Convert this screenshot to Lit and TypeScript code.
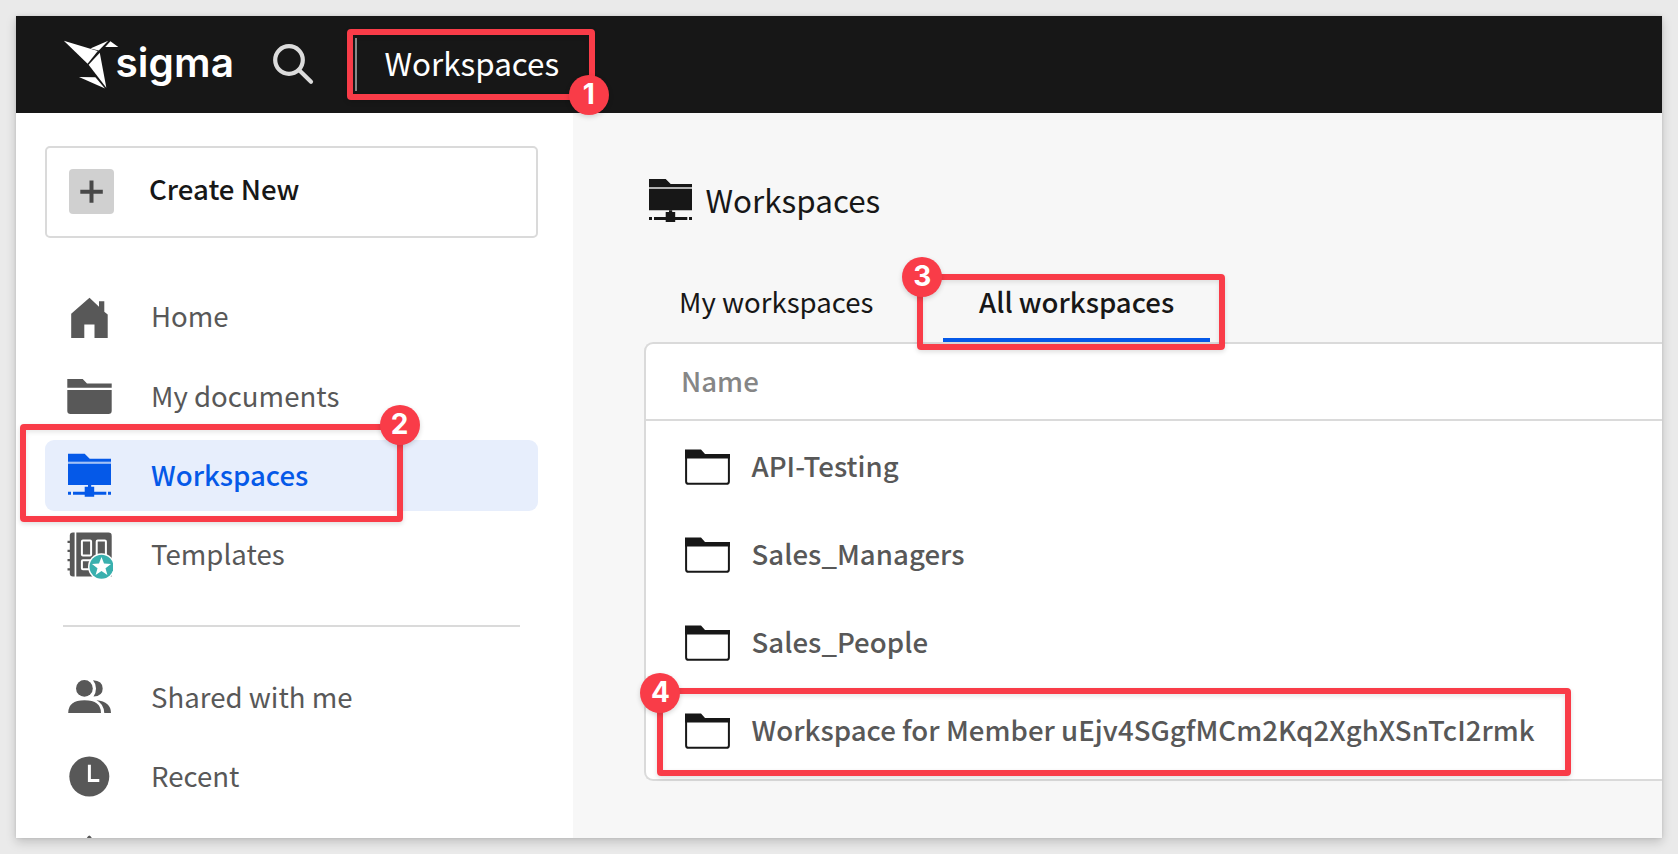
import { LitElement, html, css, svg } from "lit";
import { customElement, property } from "lit/decorators.js";
import { classMap } from "lit/directives/class-map.js";

const networkFolder = svg`
  <path d="M0 0H16.7L21.7 5H43V8H0Z"/>
  <path d="M0 8H43V10H0Z" opacity=".3"/>
  <path d="M0 10H43V31.3H0Z"/>
  <path d="M20 31.3H23.2V33H26.2V38H38.3V41H26.2V43H16.7V41H5V38H16.7V33H20Z"/>
  <path d="M0 38H3V41H0ZM40 38H43V41H40Z"/>
`;

const icons: Record<string, unknown> = {
  home: svg`<g transform="translate(-65 -292.8)"><path d="M71.2 313.5 89.5 297.5 99 306.5V301H104.3V311.5L107.7 314.3V337.7H94.5V324.2H84.3V337.7H71.2Z"/></g>`,
  folder: svg`<g transform="translate(-65 -371.8)"><path d="M67.3 378.7H82.7L87 383.2H111.7V387.5H67.3Z"/><path d="M67.3 389.8H111.7V410.5Q111.7 413.8 108.4 413.8H70.6Q67.3 413.8 67.3 410.5Z"/></g>`,
  workspaces: svg`<g transform="translate(3 2.7)">${networkFolder}</g>`,
  templates: svg`<g transform="translate(-65 -530.8)">
    <path d="M73 532.3H74.6V576.3H73Q69.8 576.3 69.8 573V535.5Q69.8 532.3 73 532.3Z"/>
    <path d="M67.5 540.5H71V542.7H67.5ZM67.5 549.6H71V551.8H67.5ZM67.5 558.8H71V561H67.5ZM67.5 568H71V570.2H67.5Z"/>
    <path d="M76.3 532.3H108.5Q111.7 532.3 111.7 535.5V576.3H76.3Z"/>
    <g fill="none" stroke="#fff" stroke-width="2"><rect x="81.9" y="540.3" width="9.2" height="15" rx="1"/><rect x="96.7" y="540.3" width="9.2" height="15" rx="1"/><rect x="81.9" y="560" width="9.2" height="9" rx="1"/></g>
    <circle cx="101.5" cy="566.5" r="13.5" fill="#fff"/><circle cx="101.5" cy="566.5" r="12" fill="#39b0ae"/>
    <path fill="#fff" d="M101.5 556.8 104 563.4 111 563.7 105.5 568 107.4 574.8 101.5 570.9 95.6 574.8 97.5 568 92 563.7 99 563.4Z"/></g>`,
  shared: svg`<g transform="translate(-65 -673.8)">
    <ellipse cx="84.4" cy="689.2" rx="8.4" ry="8.4"/>
    <path d="M93 681Q102.7 681.5 102.7 689.2 102.7 697 93.5 697.2 96 693.5 96 689.2 96 684.5 93 681Z"/>
    <path d="M68.2 713.8Q68.2 701 84.5 701 101 701 101 713.8Z"/>
    <path d="M96.5 701Q111 702.5 111 713.8H104.3Q103.8 704.5 96.5 701Z"/></g>`,
  recent: svg`<g transform="translate(-65 -752.8)"><circle cx="89.3" cy="776.4" r="20"/><path d="M89.4 764.5V780.2H99.3" fill="none" stroke="#fff" stroke-width="3"/></g>`,
  favorites: svg`<g transform="translate(-65 -832.2)"><path d="M89.3 835.6Q91.8 836.2 94.5 845L113 846 98 858 103 876 89.3 866 75 876 81 858 66 846 84.3 845Q86.8 836.2 89.3 835.6Z"/></g>`,
};

const logo = svg`
  <path d="M63.8 40.2 97.8 50.6 87.6 63.2Z"/>
  <path d="M90.4 47.9 108.2 40.3 98.8 49.9Z"/>
  <path d="M110.4 40.8 118.3 46.6H105.2Z"/>
  <path d="M99.8 52.2 106.3 87.2 88.6 64.2Z"/>
  <path d="M79 76.4 95.4 76.8 105 88Z"/>
`;

@customElement("nav-item")
class NavItem extends LitElement {
  @property() icon = "";
  @property() label = "";
  @property({ type: Boolean }) active = false;

  static styles = css`
    :host { display: block; flex: none; }
    .item { display: flex; align-items: center; height: 71px; padding-left: 20px; border-radius: 9px; color: #585858; }
    .item svg { flex: none; width: 48px; height: 48px; fill: currentColor; }
    .label { margin-left: 38px; padding-bottom: 3px; line-height: 40px; white-space: nowrap; }
    .active { background: #e7eefc; color: #0559e8; font-weight: 500; }
  `;

  render() {
    return html`<div class=${classMap({ item: true, active: this.active })}>
      <svg viewBox="0 0 48 48">${icons[this.icon]}</svg>
      <span class="label">${this.label}</span>
    </div>`;
  }
}

@customElement("app-root")
class AppRoot extends LitElement {
  static styles = css`
    :host {
      display: block; box-sizing: border-box; width: 1678px; height: 854px; padding: 16px; overflow: hidden;
      position: relative; background: #eaeaea; color: #171717;
      font: 400 27.6px "Noto Sans CJK SC", "Noto Sans", sans-serif;
    }
    .window {
      display: grid; grid-template: 97px 1fr / 557px 1fr; width: 1646px; height: 822px;
      box-shadow: 0 4px 10px rgba(0, 0, 0, .18), 0 0 3px rgba(0, 0, 0, .1);
    }
    .top { grid-column: 1 / 3; display: flex; align-items: center; background: #171717; color: #fff; }
    .bird { width: 56px; height: 50px; margin: 0 0 0 47px; fill: #fff; flex: none; }
    .brand { margin: -3px 0 0 -3.6px; width: 117px; font: 600 40.6px/50px Inter, sans-serif; letter-spacing: .1px; }
    .search { width: 42px; height: 42px; margin: -1px 0 0 40px; flex: none; fill: none; stroke: #dcdcdc; stroke-width: 4.2; }
    .crumb { margin-left: 40.6px; padding-left: 27.4px; height: 53px; border-left: 2px solid #8a8a8a; font-size: 31.4px; line-height: 50px; }
    .side { display: flex; flex-direction: column; min-height: 0; overflow: hidden; background: #fff; padding: 33px 35px 0 29px; }
    .create { display: flex; align-items: center; flex: none; box-sizing: border-box; height: 92px; border: 2px solid #dadada; border-radius: 5px; padding: 0 0 2px 22px; font-weight: 500; }
    .plus { width: 45px; height: 45px; border-radius: 4px; background: #d0d0d0; }
    .plus svg { display: block; width: 45px; height: 45px; stroke: #484848; stroke-width: 4; }
    .create span { margin-left: 35px; padding-bottom: 7px; line-height: 40px; }
    .nav { display: flex; flex-direction: column; gap: 8.33px; flex: none; }
    .first { margin-top: 43.3px; }
    .rule { flex: none; height: 2px; margin: 34.7px 18px 35px; background: #dadada; }
    .main { background: #f7f7f7; min-height: 0; overflow: hidden; padding: 62px 0 0 71px; }
    .title { display: flex; align-items: center; height: 51px; font-size: 31.4px; line-height: 50px; }
    .title svg { width: 43px; height: 43px; margin: 0 13.5px 0 5px; flex: none; }
    .title span { padding-bottom: 1px; }
    .tabs { display: flex; height: 116px; align-items: flex-end; }
    .tab { box-sizing: border-box; height: 79px; padding: 18px 0 0 36px; line-height: 40px; white-space: nowrap; }
    .mine { width: 299px; padding-left: 35px; }
    .current { width: 267px; border-bottom: 4px solid #0559e8; font-weight: 500; }
    .table { box-sizing: border-box; height: 439px; background: #fff; border: 2px solid #dadada; border-right: 0; border-radius: 9px 0 0 9px; font-weight: 500; }
    .head { box-sizing: border-box; height: 77px; padding: 0 0 3px 35px; border-bottom: 2px solid #dadada; color: #868686; line-height: 72px; }
    .row { display: flex; align-items: center; height: 88px; padding-left: 39px; color: #585858; white-space: nowrap; letter-spacing: .03px; }
    .row svg { width: 45px; height: 36px; margin-top: 4px; flex: none; }
    .row span { margin-left: 21.5px; line-height: 40px; }
    .mark { position: absolute; box-sizing: border-box; border: 6px solid #f93c48; border-radius: 4px; box-shadow: 0 2px 5px rgba(0, 0, 0, .13), inset 0 2px 5px rgba(0, 0, 0, .1); }
    .badge { position: absolute; width: 40px; height: 40px; border-radius: 50%; background: #f93c48; color: #fff; text-align: center; font: 700 28px/38px Inter, sans-serif; box-shadow: 0 2px 5px rgba(0, 0, 0, .16); }
    .m1 { left: 347.4px; top: 29px; width: 247.6px; height: 70.5px; }
    .m2 { left: 20.3px; top: 423.5px; width: 382.7px; height: 98px; }
    .m3 { left: 917px; top: 274px; width: 307.6px; height: 75.6px; }
    .m4 { left: 657px; top: 688px; width: 914px; height: 88px; }
    .b1 { left: 568.9px; top: 75px; }
    .b2 { left: 379.5px; top: 405.4px; }
    .b3 { left: 902.4px; top: 257px; }
    .b4 { left: 640.4px; top: 673.4px; }
  `;

  private rows = ["API-Testing", "Sales_Managers", "Sales_People", "Workspace for Member uEjv4SGgfMCm2Kq2XghXSnTcI2rmk"];

  render() {
    return html`
      <div class="window">
        <header class="top">
          <svg class="bird" viewBox="63 39.5 56 50">${logo}</svg>
          <span class="brand">sigma</span>
          <svg class="search" viewBox="272 43 42 42"><circle cx="289" cy="60" r="13.8"/><path d="M299 70 311 81.7" stroke-linecap="round"/></svg>
          <span class="crumb">Workspaces</span>
        </header>
        <aside class="side">
          <div class="create">
            <div class="plus"><svg viewBox="0 0 45 45"><path d="M11.3 22.7H33.8M22.5 11.5V33.8"/></svg></div>
            <span>Create New</span>
          </div>
          <nav class="nav first">
            <nav-item icon="home" label="Home"></nav-item>
            <nav-item icon="folder" label="My documents"></nav-item>
            <nav-item icon="workspaces" label="Workspaces" active></nav-item>
            <nav-item icon="templates" label="Templates"></nav-item>
          </nav>
          <div class="rule"></div>
          <nav class="nav">
            <nav-item icon="shared" label="Shared with me"></nav-item>
            <nav-item icon="recent" label="Recent"></nav-item>
            <nav-item icon="favorites" label=""></nav-item>
          </nav>
        </aside>
        <main class="main">
          <div class="title"><svg viewBox="0 0 43 43" fill="#171717">${networkFolder}</svg><span>Workspaces</span></div>
          <div class="tabs">
            <div class="tab mine">My workspaces</div>
            <div class="tab current">All workspaces</div>
          </div>
          <section class="table">
            <div class="head">Name</div>
            ${this.rows.map((name) => html`<div class="row">
              <svg viewBox="0 0 45 36"><path d="M0 .5H16L20 5H45V9.5H0Z" fill="#171717"/><path d="M1.1 9V32.4Q1.1 34.8 3.5 34.8H41.5Q43.9 34.8 43.9 32.4V9" fill="none" stroke="#171717" stroke-width="2"/></svg>
              <span>${name}</span>
            </div>`)}
          </section>
        </main>
      </div>
      <div class="mark m1"></div><div class="badge b1">1</div>
      <div class="mark m2"></div><div class="badge b2">2</div>
      <div class="mark m3"></div><div class="badge b3">3</div>
      <div class="mark m4"></div><div class="badge b4">4</div>
    `;
  }
}
